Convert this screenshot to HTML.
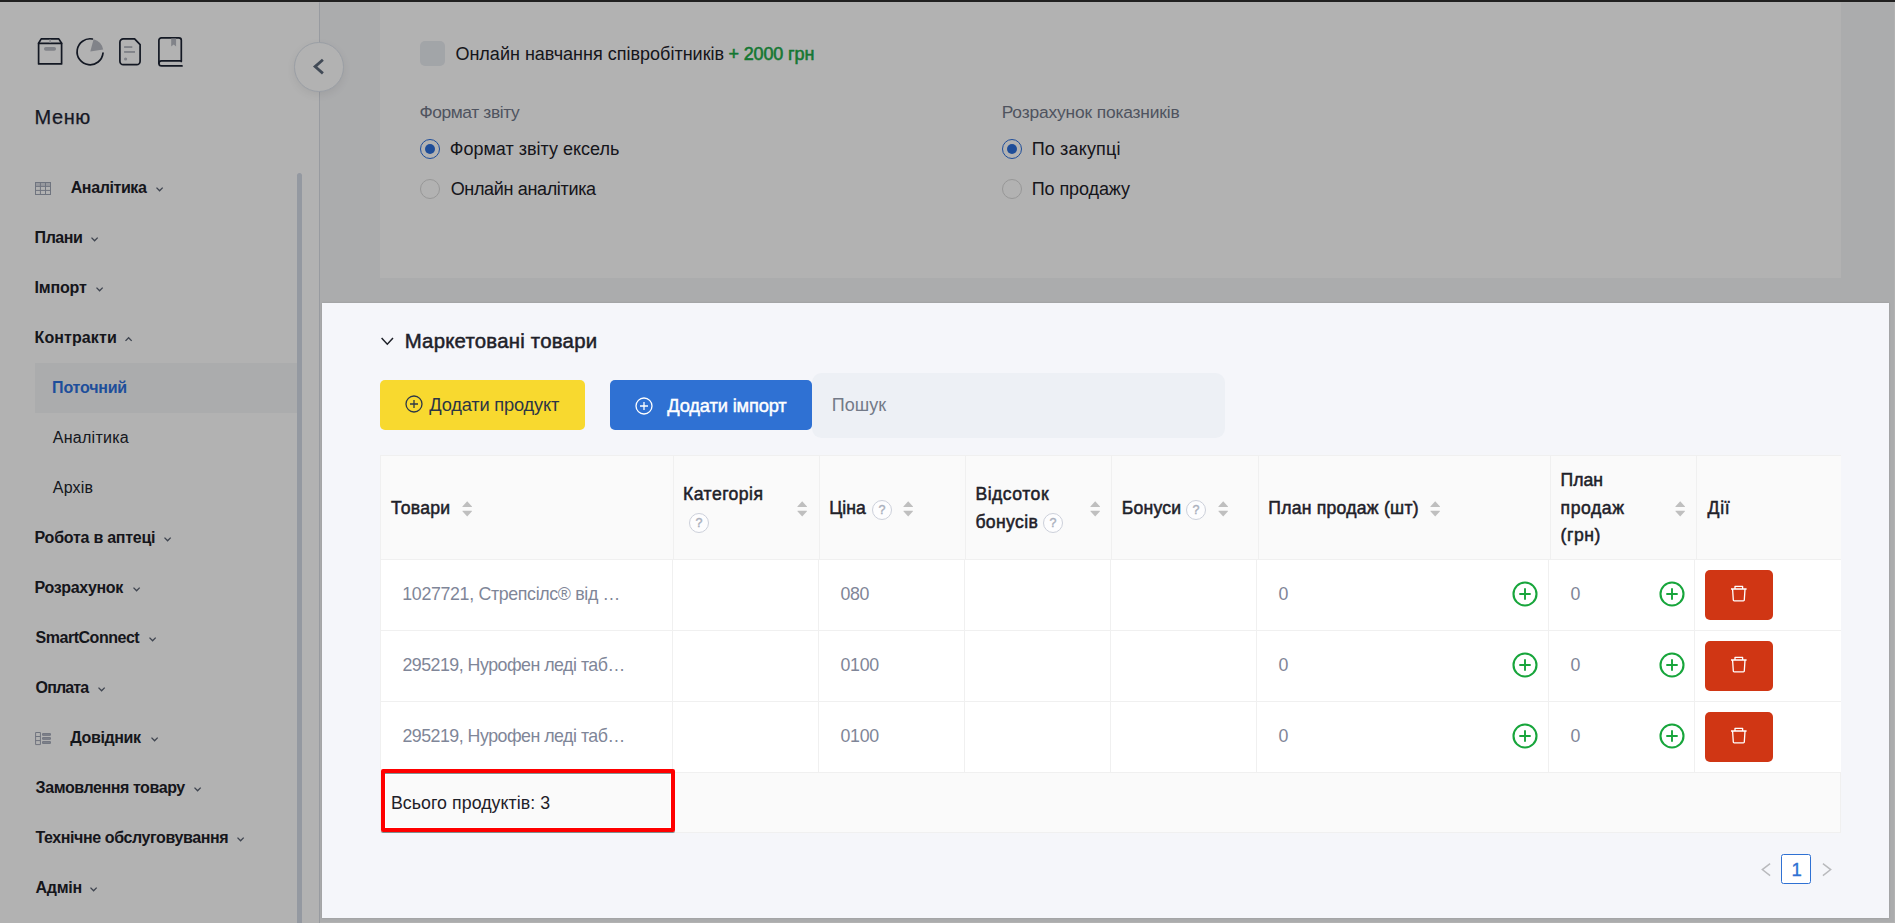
<!DOCTYPE html>
<html lang="uk">
<head>
<meta charset="utf-8">
<title>Контракти — Поточний</title>
<style>
*{box-sizing:border-box;margin:0;padding:0}
html,body{width:1895px;height:923px;overflow:hidden}
body{position:relative;background:#f5f6f8;font-family:"Liberation Sans",sans-serif;color:#1e2129}
.abs{position:absolute}
.t{position:absolute;white-space:nowrap;display:block}
svg{position:absolute;overflow:visible}
#topbar{position:absolute;left:0;top:0;width:1895px;height:2px;background:#2f2f2f;z-index:5}
#topline{position:absolute;left:0;top:2px;width:1895px;height:1px;background:rgba(255,255,255,.35);z-index:5}
#sidebar{position:absolute;left:0;top:0;width:320px;height:923px;background:#fff;border-right:1px solid #dadee6}
.active-bg{position:absolute;left:35px;top:363px;width:262px;height:50px;background:#f5f6f8}
.sbar{position:absolute;left:297px;top:173px;width:5px;height:760px;border-radius:3px;background:#d5dbe7}
#toggle{position:absolute;left:294px;top:42px;width:49.5px;height:49.5px;border-radius:50%;background:#fff;border:1px solid #dde3ec;box-shadow:0 3px 9px rgba(0,0,0,.07);z-index:3}
#card{position:absolute;left:380px;top:0;width:1461px;height:278px;background:#fff}
.cb{position:absolute;left:420px;top:41px;width:25px;height:25px;border-radius:5px;background:#e9ecf1}
.radio{position:absolute;width:20px;height:20px;border-radius:50%;border:1px solid #d9d9d9;background:#fff}
.radio.on{border:1.3px solid #2c6fdc}
.radio.on:after{content:"";position:absolute;left:50%;top:50%;width:10.4px;height:10.4px;margin:-5.2px 0 0 -5.2px;border-radius:50%;background:#2c6fdc}
#dim{position:absolute;left:0;top:0;width:1895px;height:923px;background:rgba(0,0,0,.3);z-index:10}
#hl{position:absolute;left:322px;top:303px;width:1567px;height:615px;background:#f5f6fa;z-index:20;box-shadow:0 0 2px 0 rgba(0,0,0,.13)}
#hl .in{position:absolute;left:-322px;top:-303px;width:1895px;height:923px}
.btn{position:absolute;top:380px;height:50px;border-radius:5px}
.btn.y{left:380px;width:205px;background:#f8d92f}
.btn.b{left:610px;width:202px;background:#2f71d3}
.search{position:absolute;left:812px;top:373px;width:413px;height:65px;border-radius:9.5px;background:#edf0f5}
table{margin-left:380px;width:1460px;border-collapse:collapse;table-layout:fixed;background:#fff}
th,td{border:1px solid #f0f0f0;text-align:left;vertical-align:middle;font-weight:400}
#thead{margin-top:455px}
th{background:#fafafa;height:104px}
td{height:71px}
#tbody tbody tr:first-child td{border-top:none;height:70px}
thead th:last-child,tbody td:last-child{border-right:none}
tfoot td{background:#fafafa;height:60px}
.q{position:absolute;width:20px;height:20px;border:1px solid #ccd0da;border-radius:50%;background:#fdfdfe}
.q i{position:absolute;left:0;top:0;width:18px;text-align:center;font-style:normal;font-size:12.5px;line-height:18px;color:#aab0bc;font-weight:400;-webkit-text-stroke:.4px #aab0bc}
.del{position:absolute;width:68px;height:50px;border-radius:5px;background:#d03614}
.redbox{position:absolute;left:381px;top:769px;width:294px;height:63px;border:4px solid #ff0000;border-radius:2px;box-shadow:0 1px 0 0 rgba(90,110,110,.75),inset 0 1px 0 0 rgba(90,110,110,.75),inset 0 0 0 1px #fff,inset 0 2px 0 0 #fff}
.pg{position:absolute;left:1781px;top:854px;width:30px;height:30px;border:1px solid #2f71d3;border-radius:2.5px;background:#fff}
</style>
</head>
<body>
<div id="topbar"></div><div id="topline"></div>
<div class="abs" style="left:1894px;top:0;width:1px;height:923px;background:#fff"></div><div class="abs" style="left:320px;top:922px;width:1575px;height:1px;background:#fff"></div>
<!-- sidebar -->
<div id="sidebar">
<div class="active-bg"></div>
<div class="sbar"></div>
<svg style="left:30px;top:30px" width="160" height="45" viewBox="30 30 160 45">
 <g fill="none" stroke="#1c2333" stroke-width="1.7" stroke-linejoin="round" stroke-linecap="round">
  <path d="M41.2 38.9 H58.8 L61.6 43.2 V63.9 H38.6 V43.2 Z"/>
  <path d="M38.6 43.3 H61.6"/>
  <path d="M92.4 39.0 A13 13 0 1 0 103 53.2"/>
  <path d="M123.3 38.9 H134.6 L140.1 44.6 V61.3 A3.4 3.4 0 0 1 136.7 64.7 H123.3 A3.4 3.4 0 0 1 119.9 61.3 V42.3 A3.4 3.4 0 0 1 123.3 38.9 Z"/>
  <path d="M181.3 61.4 V40.3 A2.4 2.4 0 0 0 178.9 37.9 H161.3 A2.4 2.4 0 0 0 158.9 40.3 V63.2 A2.7 2.7 0 0 0 161.6 65.9 H182"/>
  <path d="M158.9 63.2 A2.5 2.5 0 0 1 161.4 60.8 H181.3"/>
 </g>
 <g fill="#b9bcc4">
  <rect x="49.4" y="39.4" width="1.3" height="3.6"/>
  <rect x="44" y="47" width="12" height="3.7" rx="1.8"/>
  <path d="M90.3 51.5 L93.6 39.3 A13.4 13.4 0 0 1 103.2 49.6 Z"/>
  <rect x="124.1" y="46.1" width="8.2" height="1.9"/>
  <rect x="124.1" y="51" width="10.9" height="1.9"/>
  <circle cx="125.6" cy="59" r="1.6"/>
  <path d="M171.2 38.6 H176.1 V46.4 L173.65 44.6 L171.2 46.4 Z"/>
 </g>
</svg>
<svg style="left:35px;top:182px" width="16" height="13" viewBox="0 0 16 13">
 <rect x="1" y="1" width="14" height="3" fill="#d9dce3"/>
 <rect x="0.5" y="0.5" width="15" height="12" fill="none" stroke="#a0a6b6"/>
 <path d="M0.5 4.4 H15.5 M0.5 8.4 H15.5 M5.4 0.5 V12.5 M10.5 0.5 V12.5" stroke="#a0a6b6" fill="none"/>
</svg>
<svg style="left:35px;top:732px" width="16" height="13" viewBox="0 0 16 13">
 <path d="M0.6 0.5 H5.4 V12.6 H0.6 Z M0.6 4.5 H5.4 M0.6 8.6 H5.4" fill="none" stroke="#a0a6b6"/>
 <path d="M7.6 1.6 H15.4 V3.3 H7.6 Z M7.6 5.6 H15.4 V7.3 H7.6 Z M7.6 9.6 H15.4 V11.4 H7.6 Z" fill="#b9bdc9" stroke="#a0a6b6"/>
</svg>
<span class="t" style="left:34.5px;top:104px;font-size:20px;line-height:26px;letter-spacing:0.582px;color:#1f2535;-webkit-text-stroke:0.25px #1f2535;">Меню</span>
<span class="t" style="left:70.7px;top:176px;font-size:16px;line-height:24px;letter-spacing:-0.388px;color:#1e2129;font-weight:700;">Аналітика</span><svg style="left:155.8px;top:187.1px" width="7.2" height="4.5" viewBox="0 0 7.2 4.5"><path d="M0.5 0.6 L3.6 3.8 L6.7 0.6" fill="none" stroke="#5b6373" stroke-width="1.35"/></svg>
<span class="t" style="left:34.6px;top:226px;font-size:16px;line-height:24px;letter-spacing:-0.457px;color:#1e2129;font-weight:700;">Плани</span><svg style="left:90.8px;top:237.1px" width="7.2" height="4.5" viewBox="0 0 7.2 4.5"><path d="M0.5 0.6 L3.6 3.8 L6.7 0.6" fill="none" stroke="#5b6373" stroke-width="1.35"/></svg>
<span class="t" style="left:34.6px;top:276px;font-size:16px;line-height:24px;letter-spacing:-0.196px;color:#1e2129;font-weight:700;">Імпорт</span><svg style="left:95.7px;top:287.1px" width="7.2" height="4.5" viewBox="0 0 7.2 4.5"><path d="M0.5 0.6 L3.6 3.8 L6.7 0.6" fill="none" stroke="#5b6373" stroke-width="1.35"/></svg>
<span class="t" style="left:34.6px;top:326px;font-size:16px;line-height:24px;letter-spacing:0.093px;color:#1e2129;font-weight:700;">Контракти</span><svg style="left:124.7px;top:337.1px" width="7.2" height="4.5" viewBox="0 0 7.2 4.5"><path d="M0.5 3.9 L3.6 0.7 L6.7 3.9" fill="none" stroke="#5b6373" stroke-width="1.35"/></svg>
<span class="t" style="left:52.1px;top:376px;font-size:16px;line-height:24px;letter-spacing:-0.209px;color:#2c70de;font-weight:700;">Поточний</span>
<span class="t" style="left:52.8px;top:426px;font-size:16px;line-height:24px;letter-spacing:0.261px;color:#20242c;">Аналітика</span>
<span class="t" style="left:52.8px;top:476px;font-size:16px;line-height:24px;letter-spacing:0.189px;color:#20242c;">Архів</span>
<span class="t" style="left:34.6px;top:526px;font-size:16px;line-height:24px;letter-spacing:-0.243px;color:#1e2129;font-weight:700;">Робота в аптеці</span><svg style="left:163.9px;top:537.1px" width="7.2" height="4.5" viewBox="0 0 7.2 4.5"><path d="M0.5 0.6 L3.6 3.8 L6.7 0.6" fill="none" stroke="#5b6373" stroke-width="1.35"/></svg>
<span class="t" style="left:34.6px;top:576px;font-size:16px;line-height:24px;letter-spacing:-0.355px;color:#1e2129;font-weight:700;">Розрахунок</span><svg style="left:133.1px;top:587.1px" width="7.2" height="4.5" viewBox="0 0 7.2 4.5"><path d="M0.5 0.6 L3.6 3.8 L6.7 0.6" fill="none" stroke="#5b6373" stroke-width="1.35"/></svg>
<span class="t" style="left:35.6px;top:626px;font-size:16px;line-height:24px;letter-spacing:-0.484px;color:#1e2129;font-weight:700;">SmartConnect</span><svg style="left:149.1px;top:637.1px" width="7.2" height="4.5" viewBox="0 0 7.2 4.5"><path d="M0.5 0.6 L3.6 3.8 L6.7 0.6" fill="none" stroke="#5b6373" stroke-width="1.35"/></svg>
<span class="t" style="left:35.6px;top:676px;font-size:16px;line-height:24px;letter-spacing:-0.882px;color:#1e2129;font-weight:700;">Оплата</span><svg style="left:98.0px;top:687.1px" width="7.2" height="4.5" viewBox="0 0 7.2 4.5"><path d="M0.5 0.6 L3.6 3.8 L6.7 0.6" fill="none" stroke="#5b6373" stroke-width="1.35"/></svg>
<span class="t" style="left:70.3px;top:726px;font-size:16px;line-height:24px;letter-spacing:-0.372px;color:#1e2129;font-weight:700;">Довідник</span><svg style="left:150.8px;top:737.1px" width="7.2" height="4.5" viewBox="0 0 7.2 4.5"><path d="M0.5 0.6 L3.6 3.8 L6.7 0.6" fill="none" stroke="#5b6373" stroke-width="1.35"/></svg>
<span class="t" style="left:35.6px;top:776px;font-size:16px;line-height:24px;letter-spacing:-0.418px;color:#1e2129;font-weight:700;">Замовлення товару</span><svg style="left:194.1px;top:787.1px" width="7.2" height="4.5" viewBox="0 0 7.2 4.5"><path d="M0.5 0.6 L3.6 3.8 L6.7 0.6" fill="none" stroke="#5b6373" stroke-width="1.35"/></svg>
<span class="t" style="left:35.4px;top:826px;font-size:16px;line-height:24px;letter-spacing:-0.399px;color:#1e2129;font-weight:700;">Технічне обслуговування</span><svg style="left:237.0px;top:837.1px" width="7.2" height="4.5" viewBox="0 0 7.2 4.5"><path d="M0.5 0.6 L3.6 3.8 L6.7 0.6" fill="none" stroke="#5b6373" stroke-width="1.35"/></svg>
<span class="t" style="left:35.6px;top:876px;font-size:16px;line-height:24px;letter-spacing:-0.298px;color:#1e2129;font-weight:700;">Адмін</span><svg style="left:90.2px;top:887.1px" width="7.2" height="4.5" viewBox="0 0 7.2 4.5"><path d="M0.5 0.6 L3.6 3.8 L6.7 0.6" fill="none" stroke="#5b6373" stroke-width="1.35"/></svg>
</div>
<div id="toggle"><svg style="left:0;top:0" width="47" height="47" viewBox="0 0 47 47"><path d="M27.9 16.8 L20.1 23.6 L27.9 30.4" fill="none" stroke="#5e6a7b" stroke-width="2.8"/></svg></div>
<!-- top card -->
<div id="card"></div>
<div class="cb"></div>
<span class="t" style="left:455.4px;top:42px;font-size:18px;line-height:24px;letter-spacing:0.009px;color:#1e2129;">Онлайн навчання співробітників</span><span class="t" style="left:728.5px;top:42px;font-size:18px;line-height:24px;letter-spacing:-0.137px;color:#1cab48;-webkit-text-stroke:0.55px #1cab48;">+ 2000 грн</span>
<span class="t" style="left:419.4px;top:101px;font-size:17.4px;line-height:22px;letter-spacing:-0.386px;color:#717889;">Формат звіту</span><span class="t" style="left:1001.7px;top:101px;font-size:17.4px;line-height:22px;letter-spacing:-0.163px;color:#717889;">Розрахунок показників</span>
<div class="radio on" style="left:420px;top:139px"></div><span class="t" style="left:449.7px;top:137px;font-size:18px;line-height:24px;letter-spacing:0.005px;color:#1e2129;">Формат звіту ексель</span>
<div class="radio" style="left:420px;top:179px"></div><span class="t" style="left:450.7px;top:177px;font-size:18px;line-height:24px;letter-spacing:-0.339px;color:#1e2129;">Онлайн аналітика</span>
<div class="radio on" style="left:1002px;top:139px"></div><span class="t" style="left:1031.7px;top:137px;font-size:18px;line-height:24px;letter-spacing:0.161px;color:#1e2129;">По закупці</span>
<div class="radio" style="left:1002px;top:179px"></div><span class="t" style="left:1031.7px;top:177px;font-size:18px;line-height:24px;letter-spacing:-0.087px;color:#1e2129;">По продажу</span>
<div id="dim"></div>
<!-- highlighted panel -->
<div id="hl"><div class="in">
<svg style="left:381.3px;top:336.6px" width="12.6" height="8.6" viewBox="0 0 12.6 8.6"><path d="M0.6 0.9 L6.3 7.2 L12 0.9" fill="none" stroke="#1e2129" stroke-width="1.5"/></svg>
<span class="t" style="left:404.7px;top:328px;font-size:20.4px;line-height:26px;letter-spacing:0.218px;color:#1e2129;-webkit-text-stroke:0.5px #1e2129;">Маркетовані товари</span>
<div class="btn y"></div><svg style="left:404.6px;top:394.6px" width="18" height="18" viewBox="0 0 18 18"><circle cx="9" cy="9" r="8" fill="none" stroke="#2c3748" stroke-width="1.3"/><path d="M9 5 V13 M5 9 H13" stroke="#2c3748" stroke-width="1.3"/></svg><span class="t" style="left:429.3px;top:393px;font-size:18.3px;line-height:24px;letter-spacing:-0.207px;color:#2c3545;">Додати продукт</span>
<div class="btn b"></div><svg style="left:634.5px;top:396.6px" width="18" height="18" viewBox="0 0 18 18"><circle cx="9" cy="9" r="8" fill="none" stroke="#fff" stroke-width="1.3"/><path d="M9 5 V13 M5 9 H13" stroke="#fff" stroke-width="1.3"/></svg><span class="t" style="left:667.3px;top:394px;font-size:18.3px;line-height:24px;letter-spacing:-0.159px;color:#fff;-webkit-text-stroke:0.45px #fff;">Додати імпорт</span>
<div class="search"></div><span class="t" style="left:831.7px;top:393px;font-size:18px;line-height:24px;letter-spacing:0.028px;color:#737a88;">Пошук</span>
<table id="thead"><colgroup><col style="width:293px"><col style="width:146px"><col style="width:146px"><col style="width:146px"><col style="width:147px"><col style="width:292px"><col style="width:146px"><col style="width:144px"></colgroup>
<thead><tr>
<th><span class="t" style="left:391.1px;top:495px;font-size:17.6px;line-height:26px;letter-spacing:0.265px;color:#1e2129;-webkit-text-stroke:0.5px #1e2129;">Товари</span><svg style="left:461.8px;top:501px" width="10.4" height="16" viewBox="0 0 10.4 16"><path d="M5.2 0.3 L10 5.6 Q10.2 6.1 9.6 6.1 H0.8 Q0.2 6.1 0.4 5.6 Z M0.8 9.7 H9.6 Q10.2 9.7 10 10.2 L5.2 15.5 L0.4 10.2 Q0.2 9.7 0.8 9.7 Z" fill="#bfbfbf"/></svg></th>
<th><span class="t" style="left:683.1px;top:481px;font-size:17.6px;line-height:26px;letter-spacing:0.437px;color:#1e2129;-webkit-text-stroke:0.5px #1e2129;">Категорія</span><span class="q" style="left:688.9px;top:512.8px"><i>?</i></span><svg style="left:796.6px;top:501px" width="10.4" height="16" viewBox="0 0 10.4 16"><path d="M5.2 0.3 L10 5.6 Q10.2 6.1 9.6 6.1 H0.8 Q0.2 6.1 0.4 5.6 Z M0.8 9.7 H9.6 Q10.2 9.7 10 10.2 L5.2 15.5 L0.4 10.2 Q0.2 9.7 0.8 9.7 Z" fill="#bfbfbf"/></svg></th>
<th><span class="t" style="left:829.2px;top:495px;font-size:17.6px;line-height:26px;letter-spacing:0.087px;color:#1e2129;-webkit-text-stroke:0.5px #1e2129;">Ціна</span><span class="q" style="left:872.0px;top:499.8px"><i>?</i></span><svg style="left:903.4px;top:501px" width="10.4" height="16" viewBox="0 0 10.4 16"><path d="M5.2 0.3 L10 5.6 Q10.2 6.1 9.6 6.1 H0.8 Q0.2 6.1 0.4 5.6 Z M0.8 9.7 H9.6 Q10.2 9.7 10 10.2 L5.2 15.5 L0.4 10.2 Q0.2 9.7 0.8 9.7 Z" fill="#bfbfbf"/></svg></th>
<th><span class="t" style="left:975.4px;top:481px;font-size:17.6px;line-height:26px;letter-spacing:0.508px;color:#1e2129;-webkit-text-stroke:0.5px #1e2129;">Відсоток</span><span class="t" style="left:975.4px;top:509px;font-size:17.6px;line-height:26px;letter-spacing:0.37px;color:#1e2129;-webkit-text-stroke:0.5px #1e2129;">бонусів</span><span class="q" style="left:1042.9px;top:512.8px"><i>?</i></span><svg style="left:1089.6px;top:501px" width="10.4" height="16" viewBox="0 0 10.4 16"><path d="M5.2 0.3 L10 5.6 Q10.2 6.1 9.6 6.1 H0.8 Q0.2 6.1 0.4 5.6 Z M0.8 9.7 H9.6 Q10.2 9.7 10 10.2 L5.2 15.5 L0.4 10.2 Q0.2 9.7 0.8 9.7 Z" fill="#bfbfbf"/></svg></th>
<th><span class="t" style="left:1121.8px;top:495px;font-size:17.6px;line-height:26px;letter-spacing:0.211px;color:#1e2129;-webkit-text-stroke:0.5px #1e2129;">Бонуси</span><span class="q" style="left:1186.1px;top:499.8px"><i>?</i></span><svg style="left:1217.8px;top:501px" width="10.4" height="16" viewBox="0 0 10.4 16"><path d="M5.2 0.3 L10 5.6 Q10.2 6.1 9.6 6.1 H0.8 Q0.2 6.1 0.4 5.6 Z M0.8 9.7 H9.6 Q10.2 9.7 10 10.2 L5.2 15.5 L0.4 10.2 Q0.2 9.7 0.8 9.7 Z" fill="#bfbfbf"/></svg></th>
<th><span class="t" style="left:1268.3px;top:495px;font-size:17.6px;line-height:26px;letter-spacing:0.243px;color:#1e2129;-webkit-text-stroke:0.5px #1e2129;">План продаж (шт)</span><svg style="left:1429.6px;top:501px" width="10.4" height="16" viewBox="0 0 10.4 16"><path d="M5.2 0.3 L10 5.6 Q10.2 6.1 9.6 6.1 H0.8 Q0.2 6.1 0.4 5.6 Z M0.8 9.7 H9.6 Q10.2 9.7 10 10.2 L5.2 15.5 L0.4 10.2 Q0.2 9.7 0.8 9.7 Z" fill="#bfbfbf"/></svg></th>
<th><span class="t" style="left:1560.6px;top:467px;font-size:17.6px;line-height:26px;letter-spacing:0.001px;color:#1e2129;-webkit-text-stroke:0.5px #1e2129;">План</span><span class="t" style="left:1560.6px;top:495px;font-size:17.6px;line-height:26px;letter-spacing:0.568px;color:#1e2129;-webkit-text-stroke:0.5px #1e2129;">продаж</span><span class="t" style="left:1560.6px;top:522px;font-size:17.6px;line-height:26px;letter-spacing:0.556px;color:#1e2129;-webkit-text-stroke:0.5px #1e2129;">(грн)</span><svg style="left:1674.8px;top:501px" width="10.4" height="16" viewBox="0 0 10.4 16"><path d="M5.2 0.3 L10 5.6 Q10.2 6.1 9.6 6.1 H0.8 Q0.2 6.1 0.4 5.6 Z M0.8 9.7 H9.6 Q10.2 9.7 10 10.2 L5.2 15.5 L0.4 10.2 Q0.2 9.7 0.8 9.7 Z" fill="#bfbfbf"/></svg></th>
<th><span class="t" style="left:1707.6px;top:495px;font-size:17.6px;line-height:26px;letter-spacing:0.638px;color:#1e2129;-webkit-text-stroke:0.5px #1e2129;">Дії</span></th>
</tr></thead></table>
<table id="tbody"><colgroup><col style="width:292px"><col style="width:146px"><col style="width:146px"><col style="width:146px"><col style="width:146px"><col style="width:292px"><col style="width:146px"><col style="width:146px"></colgroup>
<tbody>
<tr><td><span class="t" style="left:402.3px;top:582px;font-size:17.8px;line-height:24px;letter-spacing:-0.336px;color:#7f8698;">1027721, Стрепсілс® від …</span></td><td></td><td><span class="t" style="left:840.5px;top:582px;font-size:17.8px;line-height:24px;letter-spacing:-0.439px;color:#7f8698;">080</span></td><td></td><td></td><td><span class="t" style="left:1278.4px;top:582px;font-size:17.8px;line-height:24px;letter-spacing:-infpx;color:#7f8698;">0</span><svg style="left:1512.4px;top:581.3px" width="26" height="26" viewBox="0 0 26 26"><circle cx="13" cy="13" r="11.5" fill="none" stroke="#17a53b" stroke-width="2.1"/><path d="M13 7.3 V18.7 M7.3 13 H18.7" stroke="#17a53b" stroke-width="1.9" fill="none"/></svg></td><td><span class="t" style="left:1570.5px;top:582px;font-size:17.8px;line-height:24px;letter-spacing:-infpx;color:#7f8698;">0</span><svg style="left:1658.6px;top:581.3px" width="26" height="26" viewBox="0 0 26 26"><circle cx="13" cy="13" r="11.5" fill="none" stroke="#17a53b" stroke-width="2.1"/><path d="M13 7.3 V18.7 M7.3 13 H18.7" stroke="#17a53b" stroke-width="1.9" fill="none"/></svg></td><td><div class="del" style="left:1705px;top:570px"><svg style="left:0;top:0" width="68" height="50" viewBox="0 0 68 50"><path d="M26 19 H41.6 M30 18.8 V16.3 H37.6 V18.8 M27.6 19.2 L28.3 29.9 A0.9 0.9 0 0 0 29.2 30.8 H38.4 A0.9 0.9 0 0 0 39.3 29.9 L40 19.2" fill="none" stroke="#fff" stroke-width="1.3" stroke-linejoin="round"/></svg></div></td></tr>
<tr><td><span class="t" style="left:402.4px;top:653px;font-size:17.8px;line-height:24px;letter-spacing:-0.498px;color:#7f8698;">295219, Нурофен леді таб…</span></td><td></td><td><span class="t" style="left:840.5px;top:653px;font-size:17.8px;line-height:24px;letter-spacing:-0.322px;color:#7f8698;">0100</span></td><td></td><td></td><td><span class="t" style="left:1278.4px;top:653px;font-size:17.8px;line-height:24px;letter-spacing:-infpx;color:#7f8698;">0</span><svg style="left:1512.4px;top:652.3px" width="26" height="26" viewBox="0 0 26 26"><circle cx="13" cy="13" r="11.5" fill="none" stroke="#17a53b" stroke-width="2.1"/><path d="M13 7.3 V18.7 M7.3 13 H18.7" stroke="#17a53b" stroke-width="1.9" fill="none"/></svg></td><td><span class="t" style="left:1570.5px;top:653px;font-size:17.8px;line-height:24px;letter-spacing:-infpx;color:#7f8698;">0</span><svg style="left:1658.6px;top:652.3px" width="26" height="26" viewBox="0 0 26 26"><circle cx="13" cy="13" r="11.5" fill="none" stroke="#17a53b" stroke-width="2.1"/><path d="M13 7.3 V18.7 M7.3 13 H18.7" stroke="#17a53b" stroke-width="1.9" fill="none"/></svg></td><td><div class="del" style="left:1705px;top:641px"><svg style="left:0;top:0" width="68" height="50" viewBox="0 0 68 50"><path d="M26 19 H41.6 M30 18.8 V16.3 H37.6 V18.8 M27.6 19.2 L28.3 29.9 A0.9 0.9 0 0 0 29.2 30.8 H38.4 A0.9 0.9 0 0 0 39.3 29.9 L40 19.2" fill="none" stroke="#fff" stroke-width="1.3" stroke-linejoin="round"/></svg></div></td></tr>
<tr><td><span class="t" style="left:402.4px;top:724px;font-size:17.8px;line-height:24px;letter-spacing:-0.498px;color:#7f8698;">295219, Нурофен леді таб…</span></td><td></td><td><span class="t" style="left:840.5px;top:724px;font-size:17.8px;line-height:24px;letter-spacing:-0.322px;color:#7f8698;">0100</span></td><td></td><td></td><td><span class="t" style="left:1278.4px;top:724px;font-size:17.8px;line-height:24px;letter-spacing:-infpx;color:#7f8698;">0</span><svg style="left:1512.4px;top:723.3px" width="26" height="26" viewBox="0 0 26 26"><circle cx="13" cy="13" r="11.5" fill="none" stroke="#17a53b" stroke-width="2.1"/><path d="M13 7.3 V18.7 M7.3 13 H18.7" stroke="#17a53b" stroke-width="1.9" fill="none"/></svg></td><td><span class="t" style="left:1570.5px;top:724px;font-size:17.8px;line-height:24px;letter-spacing:-infpx;color:#7f8698;">0</span><svg style="left:1658.6px;top:723.3px" width="26" height="26" viewBox="0 0 26 26"><circle cx="13" cy="13" r="11.5" fill="none" stroke="#17a53b" stroke-width="2.1"/><path d="M13 7.3 V18.7 M7.3 13 H18.7" stroke="#17a53b" stroke-width="1.9" fill="none"/></svg></td><td><div class="del" style="left:1705px;top:712px"><svg style="left:0;top:0" width="68" height="50" viewBox="0 0 68 50"><path d="M26 19 H41.6 M30 18.8 V16.3 H37.6 V18.8 M27.6 19.2 L28.3 29.9 A0.9 0.9 0 0 0 29.2 30.8 H38.4 A0.9 0.9 0 0 0 39.3 29.9 L40 19.2" fill="none" stroke="#fff" stroke-width="1.3" stroke-linejoin="round"/></svg></div></td></tr>
</tbody>
<tfoot><tr><td colspan="8"><span class="t" style="left:390.9px;top:791px;font-size:17.8px;line-height:24px;letter-spacing:0.044px;color:#1e2129;">Всього продуктів: 3</span></td></tr></tfoot></table>
<div class="redbox"></div>
<svg style="left:1761px;top:863px" width="10" height="13" viewBox="0 0 10 13"><path d="M9.1 0.6 L1.3 6.6 L9.1 12.6" fill="none" stroke="#b9babd" stroke-width="1.45"/></svg>
<div class="pg"></div><span class="t" style="left:1791.4px;top:858px;font-size:18.5px;line-height:24px;letter-spacing:-infpx;color:#2f71d3;-webkit-text-stroke:0.35px #2f71d3;">1</span>
<svg style="left:1822px;top:863px" width="10" height="13" viewBox="0 0 10 13"><path d="M0.9 0.6 L8.7 6.6 L0.9 12.6" fill="none" stroke="#b9babd" stroke-width="1.45"/></svg>
</div></div>
</body>
</html>
